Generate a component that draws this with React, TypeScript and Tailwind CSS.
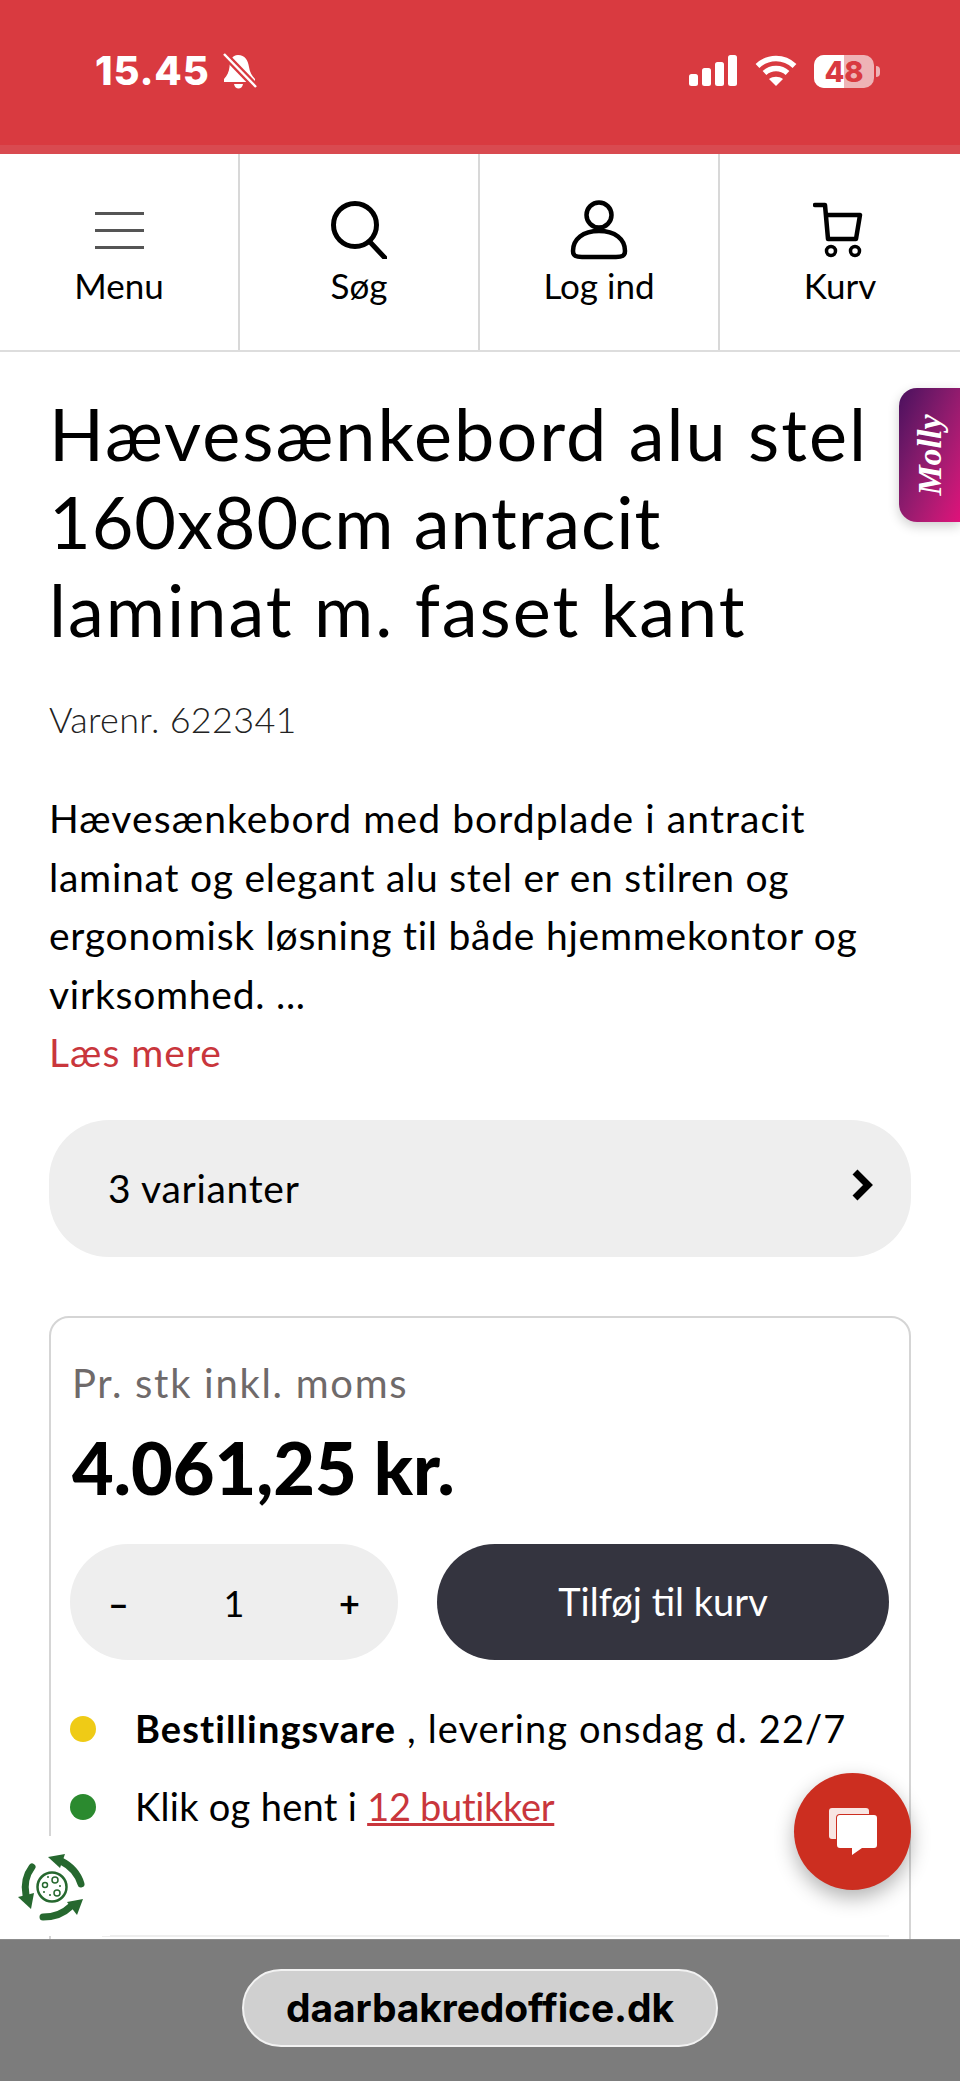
function BellOff() {
  return (
    <svg width="34" height="36" viewBox="0 0 34 36" className="ml-[13px] -mt-[1px]">
      <path d="M15 2c7 0 10 5 11 12 .6 5 3 9 6 12v3H1v-3c3-3 5-7 5.500-12C7 7 9 2 15 2z" fill="#fff" />
      <path d="M11 31h9c-.5 3-2.500 4.500-4.500 4.500S11.500 34 11 31z" fill="#fff" />
      <path d="M1 1l32 33" stroke="#d93a40" strokeWidth="7" />
      <path d="M1 1l32 33" stroke="#fff" strokeWidth="2.500" />
    </svg>
  );
}

function StatusIcons() {
  return (
    <div className="flex items-start">
      <svg width="49" height="31" viewBox="0 0 49 31" fill="#fff">
        <rect x="0" y="19" width="9" height="12" rx="2.500" />
        <rect x="13" y="13" width="9" height="18" rx="2.500" />
        <rect x="26" y="7" width="9" height="24" rx="2.500" />
        <rect x="39" y="0" width="9" height="31" rx="2.500" />
      </svg>
      <svg width="42" height="31" viewBox="0 0 42 31" className="ml-[17px]" fill="none" stroke="#fff" strokeWidth="5.500">
        <path d="M2.500 11C13 1 29 1 39.500 11" />
        <path d="M9.500 18c6.500-6 16.500-6 23 0" />
        <path d="M21 31l-7-7c4-3 10-3 14 0z" fill="#fff" stroke="none" />
      </svg>
      <div className="ml-[17px] relative w-[60px] h-[33px] rounded-[10px] bg-[#eeb3b6] overflow-hidden flex items-center justify-center">
        <div className="absolute left-0 top-0 bottom-0 w-[30px] bg-white" />
        <span className="relative text-[29px] leading-none font-extrabold text-[#d93a40] font-['Inter',sans-serif]">48</span>
      </div>
      <div className="ml-[2px] mt-[11px] w-[4px] h-[11px] rounded-r-full bg-[#eeb3b6]" />
    </div>
  );
}

function NavItem({ label, children, last }: { label: string; children: React.ReactNode; last?: boolean }) {
  return (
    <div className={`flex flex-col items-center pt-[46px] ${last ? "" : "border-r-2 border-[#d8d8d8]"}`}>
      <div className="h-[60px] flex items-center justify-center">{children}</div>
      <div className="mt-[5px] text-[35px] leading-[40px] text-black">{label}</div>
    </div>
  );
}

function RecycleLogo() {
  return (
    <svg width="68" height="70" viewBox="0 0 68 70" fill="#26682f">
      <path d="M43 8c10 5 17 13 20 23" fill="none" stroke="#26682f" strokeWidth="7" strokeLinecap="round" />
      <path d="M30 4L47 1 42 15z" />
      <path d="M14 14C8 22 6 32 8 42" fill="none" stroke="#26682f" strokeWidth="7" strokeLinecap="round" />
      <path d="M13 56L0 44 16 40z" />
      <path d="M25 64c10 0 20-3 27-10" fill="none" stroke="#26682f" strokeWidth="7" strokeLinecap="round" />
      <path d="M65 46L49 49 59 62z" />
      <circle cx="34" cy="34" r="14.500" fill="none" stroke="#26682f" strokeWidth="2.500" />
      <circle cx="37" cy="27" r="3" fill="none" stroke="#26682f" strokeWidth="1.500" />
      <circle cx="27" cy="32" r="2.500" fill="none" stroke="#26682f" strokeWidth="1.500" />
      <circle cx="39" cy="40" r="3" fill="none" stroke="#26682f" strokeWidth="1.500" />
      <circle cx="30" cy="24" r="1" />
      <circle cx="42" cy="33" r="1" />
      <circle cx="32" cy="42" r="1" />
      <circle cx="26" cy="39" r="1" />
    </svg>
  );
}

export default function App() {
  return (
    <div className="relative w-[960px] h-[2081px] overflow-hidden bg-white text-black font-['Lato',sans-serif]">
      {/* Status bar */}
      <div className="h-[154px] bg-[#d93a40] relative flex items-start justify-between pt-[54px] pl-[95px] pr-[80px]">
        <div className="flex items-start">
          <span className="text-[40px] leading-[34px] font-extrabold text-white font-['Inter',sans-serif] tracking-[0.8px]">15.45</span>
          <BellOff />
        </div>
        <div className="pt-[1px]">
          <StatusIcons />
        </div>
        <div className="absolute left-0 right-0 bottom-0 h-[9px] bg-[#d94a50]" />
      </div>

      {/* Nav */}
      <div className="grid grid-cols-4 h-[198px] border-b-2 border-[#dddddd]">
        <NavItem label="Menu">
          <div className="w-[49px] flex flex-col gap-[14px]">
            <div className="h-[3px] bg-[#555]" />
            <div className="h-[3px] bg-[#555]" />
            <div className="h-[3px] bg-[#555]" />
          </div>
        </NavItem>
        <NavItem label="Søg">
          <svg width="56" height="58" viewBox="0 0 56 58" fill="none" stroke="#000" strokeWidth="5">
            <circle cx="24" cy="24" r="21.500" />
            <path d="M39 41l15 16" strokeLinecap="round" />
          </svg>
        </NavItem>
        <NavItem label="Log ind">
          <svg width="58" height="60" viewBox="0 0 58 60" fill="none" stroke="#000" strokeWidth="4.500">
            <circle cx="29" cy="15" r="12.500" />
            <path d="M12 57c-6 0-9-1-9-6 0-12 10-20 26-20s26 8 26 20c0 5-3 6-9 6z" strokeLinejoin="round" />
          </svg>
        </NavItem>
        <NavItem label="Kurv" last>
          <svg width="50" height="56" viewBox="0 0 50 56" fill="none" stroke="#000" strokeWidth="4.500" className="-ml-[4px]">
            <path d="M2 3h10l3 34h28l4-24H13" strokeLinejoin="round" strokeLinecap="round" />
            <circle cx="18" cy="49" r="4.500" strokeWidth="3.500" />
            <circle cx="42" cy="49" r="4.500" strokeWidth="3.500" />
          </svg>
        </NavItem>
      </div>

      {/* Product */}
      <div className="pl-[49px] pr-[49px]">
        <h1 className="mt-[37px] text-[72px] leading-[88px] font-normal tracking-[2px]">
          Hævesænkebord alu stel
          <br />
          <span className="tracking-[0.9px]">160x80cm antracit</span>
          <br />
          laminat m. faset kant
        </h1>
        <div className="mt-[44px] text-[36px] leading-[44px] font-light text-[#222] tracking-[0.3px]">Varenr. 622341</div>
        <p className="mt-[48px] text-[39px] leading-[58.6px] tracking-[0.75px]">
          <span className="tracking-[1.1px]">Hævesænkebord med bordplade i antracit</span>
          <br />
          laminat og elegant alu stel er en stilren og
          <br />
          ergonomisk løsning til både hjemmekontor og
          <br />
          virksomhed. ...
          <br />
          <span className="text-[#c9363c] tracking-[1px]">Læs mere</span>
        </p>

        <div className="mt-[38px] h-[137px] rounded-[60px] bg-[#eeeeee] flex items-center justify-between pl-[59px] pr-[38px]">
          <span className="text-[39px] leading-[44px] tracking-[0.7px]">3 varianter</span>
          <svg width="22" height="32" viewBox="0 0 22 32" fill="none" stroke="#000" strokeWidth="7" className="mb-[6px]">
            <path d="M4 3l13 13L4 29" />
          </svg>
        </div>

        {/* Buy box */}
        <div className="mt-[59px] h-[800px] border-2 border-[#d5d5d5] rounded-[20px] pl-[19px] pr-[20px] pt-[43px]">
          <div className="ml-[2px] text-[40px] leading-[44px] text-[#6f6a6a] tracking-[1.7px]">Pr. stk inkl. moms</div>
          <div className="ml-[2px] mt-[22px] text-[72px] leading-[80px] font-black">4.061,25 kr.</div>

          <div className="mt-[37px] flex justify-between">
            <div className="w-[328px] h-[116px] rounded-[58px] bg-[#eeeeee] flex items-center justify-between px-[38px] pt-[3px] text-[36px]">
              <span className="font-bold">–</span>
              <span>1</span>
              <span className="font-bold">+</span>
            </div>
            <div className="w-[452px] h-[116px] rounded-[58px] bg-[#34343f] text-white flex items-center justify-center text-[38px]">
              Tilføj til kurv
            </div>
          </div>

          <div className="mt-[44px] flex items-center h-[50px] text-[38px]">
            <span className="w-[26px] h-[26px] rounded-full bg-[#efcb16] mr-[39px]" />
            <span className="tracking-[1.1px]">
              <b className="font-bold">Bestillingsvare</b> , levering onsdag d. 22/7
            </span>
          </div>
          <div className="mt-[28px] flex items-center h-[50px] text-[38px]">
            <span className="w-[26px] h-[26px] rounded-full bg-[#2b8a2f] mr-[39px]" />
            <span className="tracking-[0.3px]">
              Klik og hent i <span className="text-[#c9363c] underline tracking-[-0.3px]">12 butikker</span>
            </span>
          </div>
          <div className="mt-[103px] ml-[32px] mr-0 h-[2px] bg-[#eeeeee]" />
        </div>
      </div>

      {/* Molly tab */}
      <div className="absolute left-[899px] top-[388px] w-[61px] h-[134px] rounded-l-[18px] bg-gradient-to-br from-[#4a0f5e] to-[#e0107a] shadow-[0_4px_12px_rgba(0,0,0,0.2)] flex items-center justify-center">
        <span className="-rotate-90 text-[34px] leading-none font-bold italic text-white font-['Liberation_Serif',serif]">Molly</span>
      </div>

      {/* Recycle widget */}
      <div className="absolute left-0 top-[1836px] w-[110px] h-[100px] bg-white pl-[18px] pt-[17px]">
        <RecycleLogo />
      </div>

      {/* Chat button */}
      <div className="absolute left-[794px] top-[1773px] w-[117px] h-[117px] rounded-full bg-[#cc2e20] shadow-[0_8px_20px_rgba(0,0,0,0.3)] flex items-center justify-center">
        <svg width="48" height="47" viewBox="0 0 48 47">
          <rect x="0" y="0" width="40" height="31" rx="3" fill="#f8e6e3" />
          <path d="M11 7h34a3 3 0 0 1 3 3v27a3 3 0 0 1-3 3H33l-10 7v-7H11a3 3 0 0 1-3-3V10a3 3 0 0 1 3-3z" fill="#fff" stroke="#cc2e20" strokeWidth="2" paintOrder="stroke" />
        </svg>
      </div>

      {/* Browser address bar */}
      <div className="absolute left-0 right-0 top-[1939px] h-[142px] bg-[#7c7c7c] border-t border-[#8c8c8c] flex justify-center pt-[29px]">
        <div className="w-[476px] h-[78px] rounded-[39px] bg-[#d0d0d0] border-2 border-[#f2f2f2] flex items-center justify-center text-[39px] font-bold text-black font-['Inter',sans-serif] tracking-[-0.1px]">
          daarbakredoffice.dk
        </div>
      </div>
    </div>
  );
}
